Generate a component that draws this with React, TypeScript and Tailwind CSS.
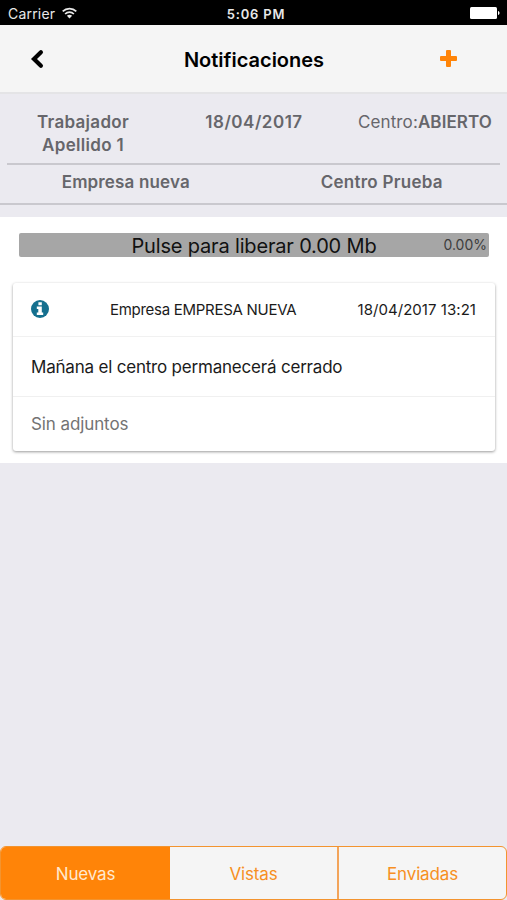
import React, { useState } from 'react';

interface Notification {
  id: number;
  company: string;
  date: string;
  message: string;
  attachments: string;
}

const notifications: Notification[] = [
  {
    id: 1,
    company: 'Empresa EMPRESA NUEVA',
    date: '18/04/2017 13:21',
    message: 'Mañana el centro permanecerá cerrado',
    attachments: 'Sin adjuntos',
  },
];

const tabs = ['Nuevas', 'Vistas', 'Enviadas'];

const InfoIcon: React.FC = () => (
  <svg className="w-[18px] h-[18px] -mt-px" viewBox="0 0 18 18">
    <circle cx="9" cy="9" r="9" fill="#15708f" />
    <path d="M7.4 2.2H10.8V5.3H7.4ZM5.8 6.6H10.8V12.6H12.2V15H5.8V12.6H7.3V9H5.8Z" fill="#fff" />
  </svg>
);

const StatusBar: React.FC = () => (
  <div className="h-[25px] bg-black text-[#e8e8e8] grid grid-cols-3 items-center pl-2 pr-[7px] pt-0.5">
    <div className="flex items-center gap-[7px]">
      <span className="text-sm tracking-[0.2px] leading-5">Carrier</span>
      <svg className="w-[15px] h-[12px] -mt-0.5" viewBox="0 0 15 12" fill="none" stroke="currentColor" strokeWidth="1.7">
        <path d="M0.7 4.4C4.5 0.6 10.5 0.6 14.3 4.4" />
        <path d="M3.1 7C5.6 4.5 9.4 4.5 11.9 7" />
        <path d="M7.5 11.4L4.9 8.7C6.4 7.4 8.6 7.4 10.1 8.7Z" fill="currentColor" stroke="none" />
      </svg>
    </div>
    <span className="pl-1 text-center text-[13px] font-semibold tracking-[0.8px] leading-5">5:06 PM</span>
    <svg className="w-[30px] h-3 -mt-px justify-self-end" viewBox="0 0 30 12" fill="#fff">
      <rect x="0" y="0" width="27" height="12" rx="1.5" />
      <path d="M28 4C30 4.6 30 7.4 28 8Z" />
    </svg>
  </div>
);

const Header: React.FC = () => (
  <header className="h-[69px] bg-[#f5f5f5] border-b-2 border-[#e4e4e6] grid grid-cols-[1fr_auto_1fr] items-center pl-[29px] pr-[28px]">
    <button className="w-4 h-5">
      <svg className="w-4 h-5" viewBox="0 0 16 20" fill="none" stroke="#000" strokeWidth="4.2" strokeLinecap="round">
        <path d="M11.9 3.3L5 10L11.9 16.7" />
      </svg>
    </button>
    <h1 className="pt-0.5 text-xl font-semibold text-black">Notificaciones</h1>
    <button className="w-[17px] h-[17px] justify-self-end mr-[22px]">
      <svg className="w-[17px] h-[17px]" viewBox="0 0 17 17" fill="#ff8408">
        <rect x="6" y="0" width="5" height="17" rx="1" />
        <rect x="0" y="6" width="17" height="5" rx="1" />
      </svg>
    </button>
  </header>
);

const WorkerInfo: React.FC = () => (
  <section className="h-[123px] text-[#66666b] text-[17px] leading-[23px] font-semibold text-center">
    <div className="mx-[7px] h-[71px] pt-[17px] border-b-2 border-[#c9c8ce] grid grid-cols-[152px_1fr_156px]">
      <span className="px-5 tracking-[0.3px]">Trabajador Apellido 1</span>
      <span className="pl-[5px] tracking-[0.5px]">18/04/2017</span>
      <span className="text-right pr-2 tracking-[0.1px] whitespace-nowrap">
        <span className="font-normal">Centro:</span>ABIERTO
      </span>
    </div>
    <div className="h-10 pt-1.5 border-b-2 border-[#c9c8ce] grid grid-cols-2">
      <span className="pr-[2px] tracking-[0.15px]">Empresa nueva</span>
      <span className="pl-[3px] tracking-[0.25px]">Centro Prueba</span>
    </div>
  </section>
);

const NotificationCard: React.FC<{ item: Notification }> = ({ item }) => (
  <article className="ml-[13px] mr-3 h-[168px] bg-white rounded-[3px] text-[#1b1b1b] shadow-[0_1px_3px_rgba(0,0,0,0.4)]">
    <div className="h-[54px] pl-[18px] pr-[19px] flex items-center border-b border-[#f1f1f1]">
      <InfoIcon />
      <span className="ml-[61px] pt-0.5 text-[15px] tracking-[-0.28px]">{item.company}</span>
      <span className="ml-auto pt-0.5 text-[15px] tracking-[0.05px]">{item.date}</span>
    </div>
    <p className="h-[60px] pt-0.5 px-[18px] flex items-center text-[17px] tracking-[-0.2px] border-b border-[#f0f0f0]">
      {item.message}
    </p>
    <p className="h-[54px] pt-px px-[18px] flex items-center text-[17px] tracking-[-0.1px] text-[#737373]">
      {item.attachments}
    </p>
  </article>
);

const App: React.FC = () => {
  const [activeTab, setActiveTab] = useState('Nuevas');

  return (
    <div className="w-[507px] h-[900px] overflow-hidden bg-[#ebeaf0] flex flex-col font-['Inter',sans-serif]">
      <StatusBar />
      <Header />
      <WorkerInfo />

      <main className="h-[246px] bg-white pt-4">
        <button className="relative block mx-[19px] w-[470px] h-6 mb-[26px] bg-[#a6a6a6] rounded-[2px] text-center text-[#111]">
          <span className="block text-xl leading-[26px] tracking-[-0.17px]">Pulse para liberar 0.00 Mb</span>
          <span className="absolute right-[2px] top-0 text-sm leading-6 text-[#3d3d3d]">0.00%</span>
        </button>
        {notifications.map(item => (
          <NotificationCard key={item.id} item={item} />
        ))}
      </main>

      <nav className="mt-auto h-[54px] pb-px">
        <div className="h-[54px] grid grid-cols-[169px_169px_1fr] border border-[#f3942f] rounded-[6px] overflow-hidden bg-[#f5f5f5]">
          {tabs.map((tab, i) => (
            <button
              key={tab}
              onClick={() => setActiveTab(tab)}
              className={`text-[17px] tracking-[-0.15px] pt-1 ${i === 1 ? 'border-r-2 border-[#f3a45a]' : ''} ${
                activeTab === tab ? 'bg-[#ff8408] text-[#ffe9cf]' : 'text-[#f78f22]'
              }`}
            >
              {tab}
            </button>
          ))}
        </div>
      </nav>
    </div>
  );
};

export default App;
